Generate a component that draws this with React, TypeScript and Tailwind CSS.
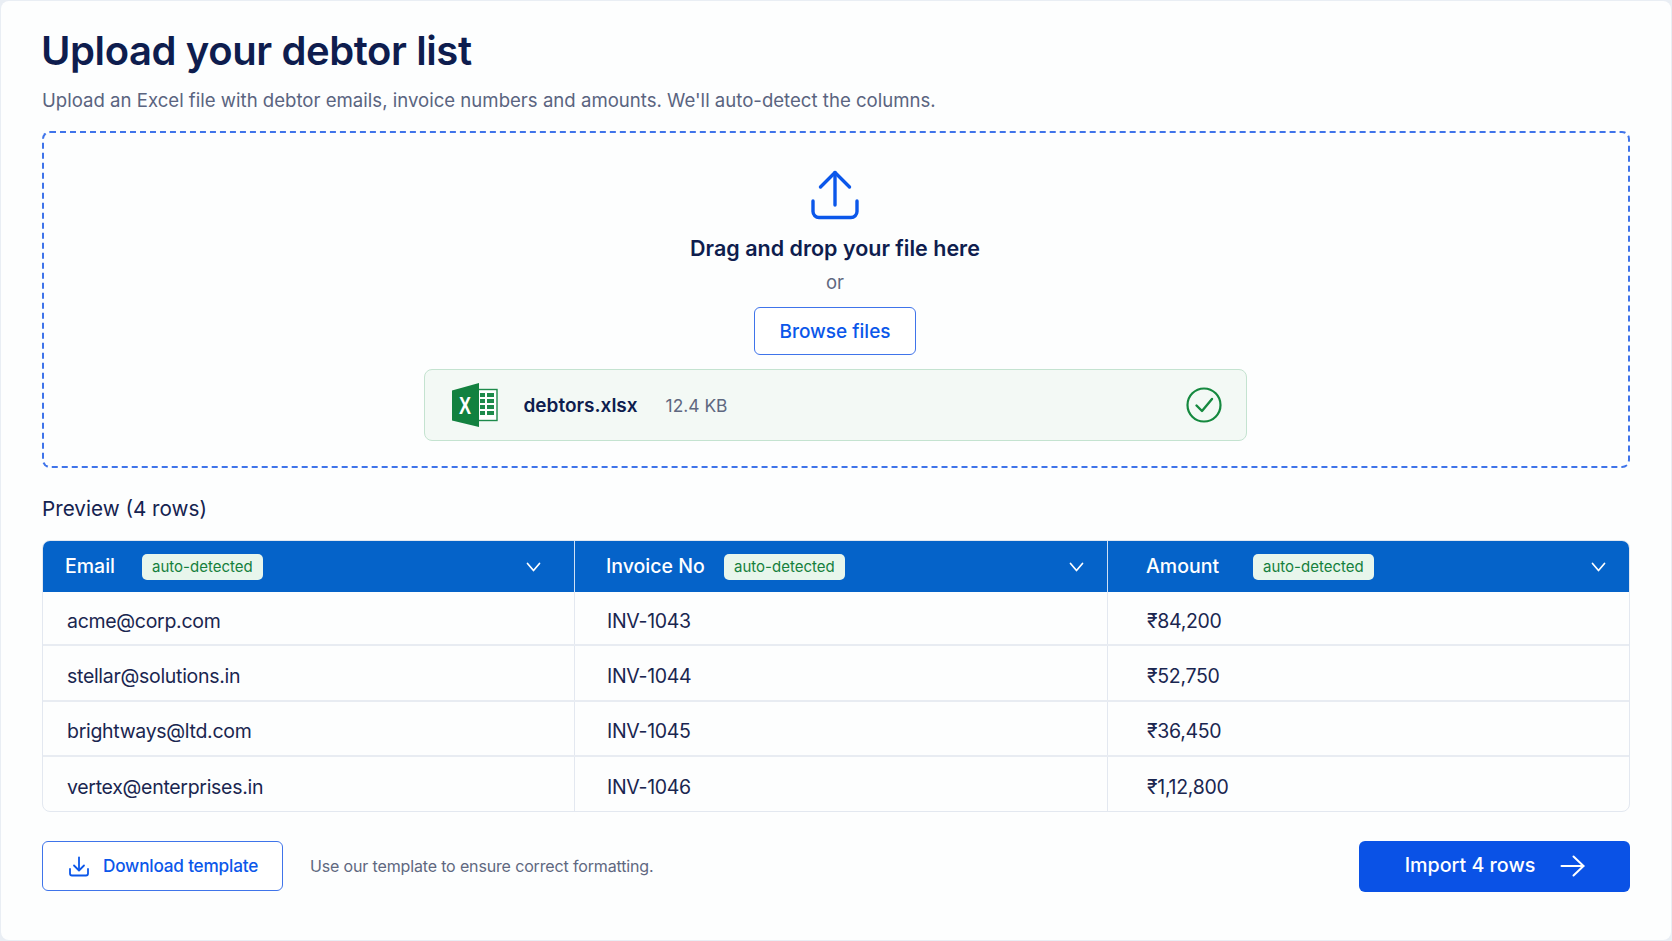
const columns = [
  { name: 'Email', labelWidth: 'w-[75px]', pad: 'pl-[22px] pr-[33px]' },
  { name: 'Invoice No', labelWidth: 'w-[116px]', pad: 'border-l border-[#cfe0f5] pl-[31px] pr-[23px]' },
  { name: 'Amount', labelWidth: 'w-[105px]', pad: 'border-l border-[#cfe0f5] pl-[38px] pr-[23px]' }
];

const rows = [
  ['acme@corp.com', 'INV-1043', '₹84,200'],
  ['stellar@solutions.in', 'INV-1044', '₹52,750'],
  ['brightways@ltd.com', 'INV-1045', '₹36,450'],
  ['vertex@enterprises.in', 'INV-1046', '₹1,12,800']
];

function UploadIcon() {
  return (
    <svg width="48" height="50" viewBox="0 0 48 50" fill="none" stroke="#0b57ea" strokeWidth="3.400" strokeLinecap="round" strokeLinejoin="round">
      <path d="M24 35V2.500" />
      <path d="M9.500 17 24 2.500 38.500 17" />
      <path d="M2 31v10.500a6 6 0 0 0 6 6h32a6 6 0 0 0 6-6V31" />
    </svg>
  );
}

function ExcelIcon() {
  return (
    <svg width="46" height="44" viewBox="0 0 46 44">
      <rect x="21" y="6.500" width="24" height="31" fill="#fff" stroke="#1d8a4b" strokeWidth="1.400" />
      <path d="M28 10h5v4h-5zM35 10h7v4h-7zM28 16h5v4h-5zM35 16h7v4h-7zM28 22h5v4h-5zM35 22h7v4h-7zM28 28h5v4h-5zM35 28h7v4h-7z" fill="#1d8a4b" />
      <path d="M0 7.500 27 0v44L0 37.500z" fill="#12813f" />
      <text x="13" y="31" textAnchor="middle" fill="#fff" fontSize="23" fontWeight="700" fontFamily="Liberation Sans, sans-serif" textLength="12" lengthAdjust="spacingAndGlyphs">
        X
      </text>
    </svg>
  );
}

function CheckCircle() {
  return (
    <svg width="36" height="36" viewBox="0 0 36 36" fill="none" stroke="#15893f" strokeLinecap="round" strokeLinejoin="round">
      <circle cx="18" cy="18" r="16.500" strokeWidth="2.200" />
      <path d="M10.500 18.500 16 24l10-12" strokeWidth="2.400" />
    </svg>
  );
}

function ChevronIcon() {
  return (
    <svg className="ml-auto" width="15" height="10" viewBox="0 0 15 10" fill="none" stroke="#fff" strokeWidth="1.700" strokeLinecap="round" strokeLinejoin="round">
      <path d="M1.500 1.500 7.500 8.500l6-7" />
    </svg>
  );
}

function DownloadIcon() {
  return (
    <svg width="22" height="21" viewBox="0 0 22 21" fill="none" stroke="#0b57ea" strokeWidth="1.800" strokeLinecap="round" strokeLinejoin="round">
      <path d="M2 13v4.500a2 2 0 0 0 2 2h14a2 2 0 0 0 2-2V13" />
      <path d="M11 1.500V14" />
      <path d="m6 9.500 5 5 5-5" />
    </svg>
  );
}

function ArrowIcon() {
  return (
    <svg width="25" height="22" viewBox="0 0 25 22" fill="none" stroke="#fff" strokeWidth="2" strokeLinecap="round" strokeLinejoin="round">
      <path d="M1.500 11H23.500" />
      <path d="M13.500 1.500 23.500 11l-10 9.500" />
    </svg>
  );
}

export default function App() {
  return (
    <div className="min-h-screen bg-[#e9eef4] p-px font-['Inter',sans-serif]">
      <div className="flex h-[939px] flex-col rounded-lg bg-[#fdfefe] px-[41px] pt-[24px]">
        <h1 className="-ml-px text-[40px] leading-[52px] font-semibold tracking-[-0.4px] text-[#0e1d4e]">Upload your debtor list</h1>
        <p className="mt-[10px] text-[18.600px] leading-[26px] text-[#5a6480]">
          Upload an Excel file with debtor emails, invoice numbers and amounts. We'll auto-detect the columns.
        </p>

        <section className="mt-[18px] flex h-[337px] flex-col items-center rounded-lg border-2 border-dashed border-[#3f74ea] pt-[37px] pr-[2px]">
          <UploadIcon />
          <h2 className="mt-[14px] text-[21.500px] leading-[28px] font-semibold text-[#0e1d4e]">Drag and drop your file here</h2>
          <p className="mt-[8px] text-[18.500px] leading-[24px] text-[#5f6880]">or</p>
          <button className="mt-[13px] h-[48px] w-[162px] rounded-md border-[1.500px] border-[#3f74ea] bg-white pt-[3px] text-[19px] font-medium text-[#0b57ea]">
            Browse files
          </button>
          <div className="mt-[14px] flex h-[72px] w-[823px] items-center rounded-lg border-[1.500px] border-[#c4e3d0] bg-[#f3f9f5] pr-[24px] pl-[27px]">
            <ExcelIcon />
            <span className="ml-[26px] pt-[2px] text-[19px] font-semibold text-[#0e1d4e]">debtors.xlsx</span>
            <span className="ml-[28px] pt-[2px] text-[17.400px] text-[#5f6880]">12.4 KB</span>
            <div className="ml-auto">
              <CheckCircle />
            </div>
          </div>
        </section>

        <h3 className="mt-[25.500px] text-[20.700px] leading-[30px] font-normal text-[#152350]">Preview (4 rows)</h3>

        <div className="mt-[16.500px] overflow-hidden rounded-lg border border-[#e3e8f0]">
          <div className="grid h-[51px] grid-cols-[531px_533px_1fr] bg-[#0563c9]">
            {columns.map((col) => (
              <div key={col.name} className={`flex items-center ${col.pad}`}>
                <span className={`text-[19.500px] font-medium text-white ${col.labelWidth}`}>{col.name}</span>
                <span className="ml-[2px] rounded-[5px] bg-[#e8f6ec] px-[10px] py-[3px] text-[15px] leading-[20px] text-[#15803d]">auto-detected</span>
                <ChevronIcon />
              </div>
            ))}
          </div>
          {rows.map((row, r) => (
            <div key={row[0]} className={`grid grid-cols-[531px_533px_1fr] ${r === 0 ? 'h-[52px]' : 'h-[55.500px] border-t-2 border-[#e8ecf2]'}`}>
              {row.map((cell, i) => (
                <div key={cell} className={`flex items-center pt-[7px] text-[19.500px] tracking-[-0.3px] text-[#1a2650] ${i === 0 ? 'pl-[24px]' : i === 1 ? 'border-l border-[#e3e8f0] pl-[32px]' : 'border-l border-[#e3e8f0] pl-[39px]'}`}>
                  {cell}
                </div>
              ))}
            </div>
          ))}
        </div>

        <div className="mt-[29px] flex items-center">
          <button className="flex h-[50px] w-[241px] items-center rounded-md border-[1.500px] border-[#3f74ea] bg-white pl-[25px] text-[17.200px] font-medium tracking-[-0.2px] text-[#0b57ea]">
            <DownloadIcon />
            <span className="ml-[13px]">Download template</span>
          </button>
          <p className="ml-[27px] text-[16px] tracking-[-0.15px] text-[#5f6880]">Use our template to ensure correct formatting.</p>
          <button className="ml-auto flex h-[51px] w-[271px] items-center justify-center gap-[25px] rounded-md bg-[#0a52e6] pl-[1px] text-[19.700px] font-medium text-white">
            Import 4 rows
            <ArrowIcon />
          </button>
        </div>
      </div>
    </div>
  );
}
